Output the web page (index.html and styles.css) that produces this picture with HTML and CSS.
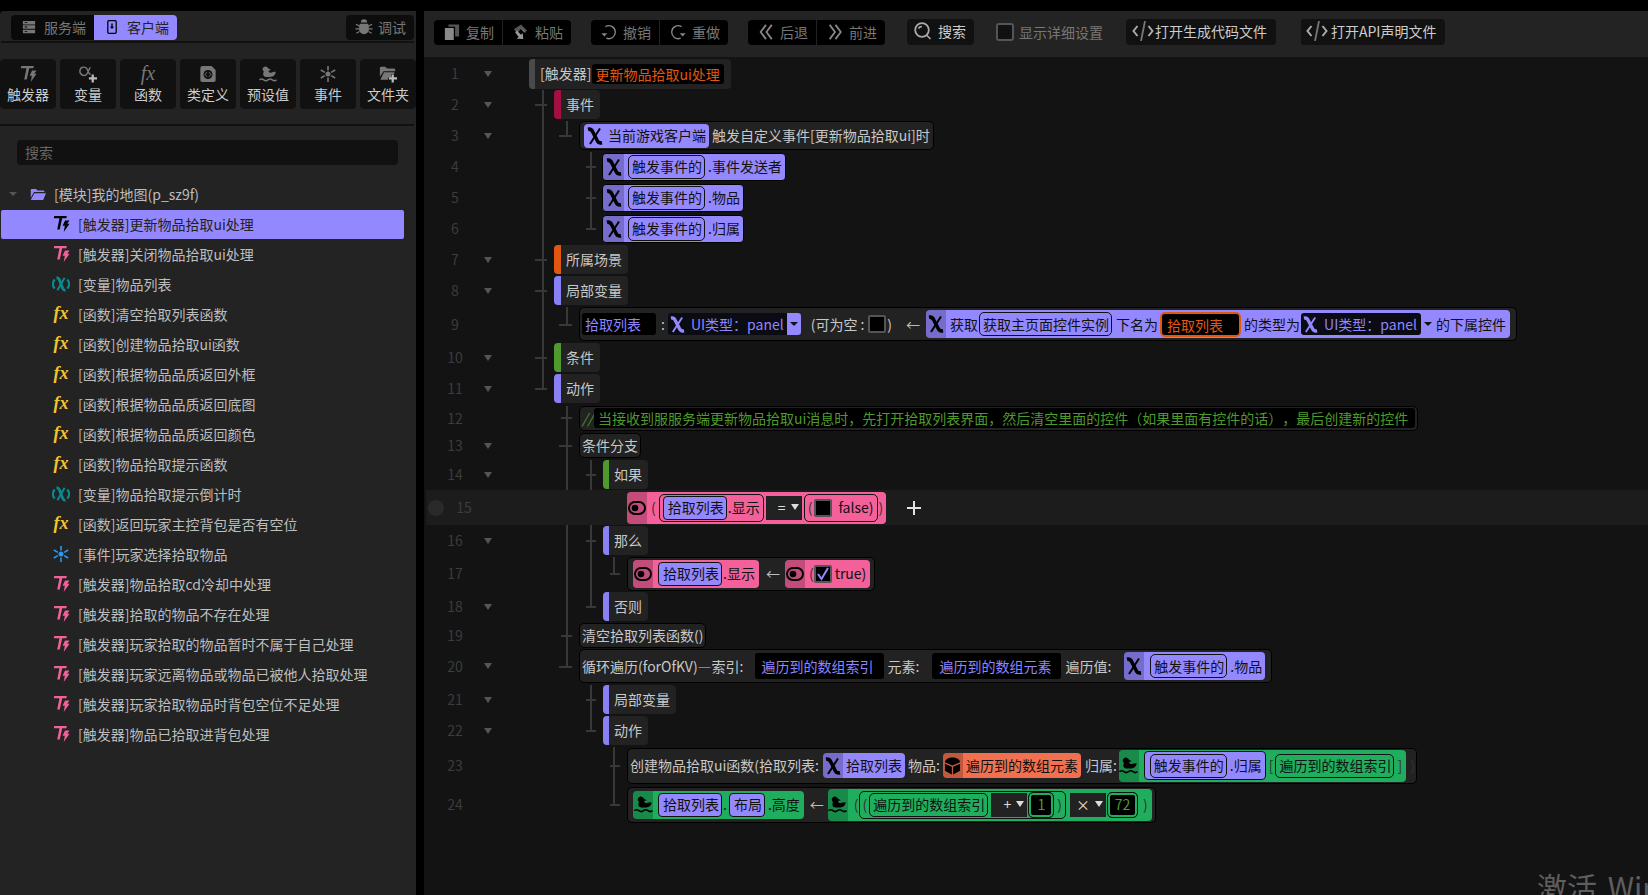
FILE: index.html
```html
<!DOCTYPE html>
<html lang="zh">
<head>
    <meta charset="UTF-8">
    <title>触发器编辑器</title>
    <link rel="stylesheet" href="styles.css">
</head>
<body>
    <!-- 图标 -->
    <svg class="defs" xmlns="http://www.w3.org/2000/svg">
        <symbol id="i-trig" viewBox="0 0 20 20"><path d="M2.500 1h14l-.6 2.600h-4.600L8.600 16H5.800L8.300 3.600H2z"/><path d="M14.500 6h5l-2.600 3.800h2.600L13 19l1.300-7h-2.500z"/></symbol>
        <symbol id="i-var" viewBox="0 0 16 20"><path d="M1 3.200c2.500-.6 3.800.6 4.700 2.500l4.600 9c.9 1.700 2.200 2.600 4.700 2.100" fill="none" stroke="currentColor" stroke-width="3.600"/><path d="M13 2.500 3 18" fill="none" stroke="currentColor" stroke-width="2"/></symbol>
        <symbol id="i-varp" viewBox="0 0 20 20"><path d="M5 3c1.800 0 2.500.7 3.100 2l3.800 10c.6 1.300 1.300 2 3.100 2" fill="none" stroke="currentColor" stroke-width="3.200"/><path d="M14 3 6 17" fill="none" stroke="currentColor" stroke-width="2.200"/><path d="M3 5C.5 8 .5 12 3 15M17 5c2.500 3 2.500 7 0 10" fill="none" stroke="currentColor" stroke-width="2.400"/></symbol>
        <symbol id="i-alpha" viewBox="0 0 20 20"><path d="M9 4.500C7 1 1 2 1 7s6 6 8 2.500L12.500 2.500M9 4.500c.8 2.500 1.800 5.500 4 6" fill="none" stroke="currentColor" stroke-width="1.600"/><path d="M11 13.500h3V10.500h2.500v3h3.500V16h-3.500v3.500H14V16h-3z" fill="#bbb"/></symbol>
        <symbol id="i-class" viewBox="0 0 20 20"><path d="M4 1h10l4.500 4.500V17a2 2 0 0 1-2 2h-13a2 2 0 0 1-2-2V3.500A2.500 2.500 0 0 1 4 1z"/><circle cx="10" cy="10.500" r="5" fill="#111"/><path d="M8.700 8 6.700 10.500l2 2.500M11.300 8l2 2.500-2 2.500" fill="none" stroke="currentColor"/></symbol>
        <symbol id="i-duck" viewBox="0 0 20 20"><path d="M5 2.500a3.500 3.500 0 0 1 5.500 1.500l3 1.500-3 .8c.5 1.700 1.500 2.400 3 2.200 2-.8 3.500-1 5-.8 0 3.300-2.500 5.500-6.500 5.500H8c-3 0-4.500-3-2.500-6C3.500 5.800 3.500 3.800 5 2.500z"/><path d="M.5 16.500q2.300-2 4.700 0t4.800 0 4.800 0 4.700 0" fill="none" stroke="currentColor" stroke-width="1.600"/></symbol>
        <symbol id="i-star" viewBox="0 0 20 20"><circle cx="10" cy="10" r="2.800"/><path d="M10 1v5M10 14v5M2 5.500l4.500 2.700M13.500 11.800 18 14.500M18 5.500l-4.500 2.700M6.500 11.800 2 14.500" fill="none" stroke="currentColor" stroke-width="1.800"/></symbol>
        <symbol id="i-foldadd" viewBox="0 0 20 20"><path d="M1 3.500C1 2.700 1.500 2 2.500 2h4.500l2 2h7.500c.8 0 1.500.7 1.500 1.500V7H5L1 13z"/><path d="M5.500 8H17v2H13.500v4H10v2.500H1.500z"/><path d="M11 13.500h3V10.500h2.500v3h3.500V16h-3.500v3.500H14V16h-3z" fill="#bbb"/></symbol>
        <symbol id="i-folder" viewBox="0 0 20 16"><path d="M1 2.500C1 1.500 1.500 1 2.500 1h5l2 2h7c1 0 1.500.5 1.500 1.500V5H5L1 12z"/><path d="M5.500 6.500H20L16.500 15h-14c-1 0-1.500-.5-1-1.500z"/></symbol>
        <symbol id="i-server" viewBox="0 0 16 16"><path d="M1 1h14v4H1zM1 6h14v4H1zM1 11h14v4H1z"/><path d="M3 2.500h3v1H3zM3 7.500h3v1H3zM3 12.500h3v1H3z" fill="#000"/></symbol>
        <symbol id="i-client" viewBox="0 0 14 20"><path d="M2.500 1h9A1.500 1.500 0 0 1 13 2.500v15a1.500 1.500 0 0 1-1.500 1.500h-9A1.500 1.500 0 0 1 1 17.500v-15A1.500 1.500 0 0 1 2.500 1z" fill="none" stroke="currentColor" stroke-width="1.800"/><path d="M6 5h2v4.500h2.200L7 13 3.800 9.500H6z"/></symbol>
        <symbol id="i-bug" viewBox="0 0 20 20"><path d="M6.500 5a3.500 3.500 0 0 1 7 0z"/><path d="M5.500 6.500h9c1 2 1 3.500 1 5.500 0 3.500-2.500 6-5.500 6s-5.500-2.500-5.500-6c0-2 0-3.500 1-5.500z"/><path d="M1 7l4 2M19 7l-4 2M.5 12h4M19.500 12h-4M1.500 17l3.500-2M18.500 17 15 15" fill="none" stroke="currentColor" stroke-width="1.400"/></symbol>
        <symbol id="i-copy" viewBox="0 0 16 18"><path d="M0 4.500h10V18H0z" fill="#8a8a8a"/><path d="M4 .5h12V14h-4.500V3H4z" fill="#555"/></symbol>
        <symbol id="i-paste" viewBox="0 0 18 18"><path d="M1 6 9 .5l7 7-3.500 2L9 5 5 10.500z" fill="#555"/><path d="M4 7l5 5 2-2 .5 7L4 16.500l2.500-2-4-5z" fill="#999"/><path d="M9 5l4.500 4.500" stroke="#999"/></symbol>
        <symbol id="i-undo" viewBox="0 0 18 18"><path d="M5 3a7.300 7.300 0 1 1 1 13" fill="none" stroke="currentColor" stroke-width="1.500"/><path d="M.5 10.500h6.500L3.700 14z"/></symbol>
        <symbol id="i-redo" viewBox="0 0 18 18"><path d="M13 3a7.300 7.300 0 1 0-1 13" fill="none" stroke="currentColor" stroke-width="1.500"/><path d="M17.500 10.500H11l3.300 3.500z"/></symbol>
        <symbol id="i-back" viewBox="0 0 16 18"><path d="M8 1 2 9l6 8M14.500 1l-6 8 6 8" fill="none" stroke="currentColor" stroke-width="2"/></symbol>
        <symbol id="i-fwd" viewBox="0 0 16 18"><path d="m2 1 6 8-6 8M8.500 1l6 8-6 8" fill="none" stroke="currentColor" stroke-width="2"/></symbol>
        <symbol id="i-search" viewBox="0 0 18 18"><circle cx="8" cy="8" r="6.800" fill="none" stroke="currentColor" stroke-width="1.800"/><path d="M4.500 6.500A4 4 0 0 1 8 4.500M12.500 13l4 4" fill="none" stroke="currentColor" stroke-width="1.600"/></symbol>
        <symbol id="i-code" viewBox="0 0 22 20"><path d="M5.500 5 1.500 10l4 5M16.500 5l4 5-4 5" fill="none" stroke="currentColor" stroke-width="2"/><path d="M13 0 9 20" fill="none" stroke="#777" stroke-width="1.800"/></symbol>
        <symbol id="i-eye" viewBox="0 0 18 14"><rect x="1" y="1" width="16" height="12" rx="6" fill="none" stroke="#000" stroke-width="2"/><circle cx="7" cy="7" r="3.300" fill="#000"/></symbol>
        <symbol id="i-box" viewBox="0 0 18 20"><path d="M1 6C1 3 5 1 9 1s8 2 8 5l-8 3.500z"/><path d="M1 7.500l7.300 3.200V19L1 15zM17 7.500l-7.300 3.200V19l7.300-4z"/></symbol>
        <symbol id="i-check" viewBox="0 0 14 14"><path d="m2 7 3.500 5L12 1" fill="none" stroke="#9488ff" stroke-width="2"/></symbol>
    </svg>

    <div class="app">
        <!-- 左侧面板 -->
        <aside class="side">
            <div class="side-tabs">
                <div class="tab-group">
                    <div class="tab"><svg class="ico i14"><use href="#i-server"/></svg>服务端</div>
                    <div class="tab active"><svg class="ico i14 client"><use href="#i-client"/></svg>客户端</div>
                </div>
                <div class="tab debug"><svg class="ico i18"><use href="#i-bug"/></svg>调试</div>
            </div>

            <div class="tools">
                <div class="tool"><svg class="ico i18"><use href="#i-trig"/></svg>触发器</div>
                <div class="tool"><svg class="ico i18"><use href="#i-alpha"/></svg>变量</div>
                <div class="tool"><span class="fx-ico">fx</span>函数</div>
                <div class="tool"><svg class="ico i18"><use href="#i-class"/></svg>类定义</div>
                <div class="tool"><svg class="ico i18"><use href="#i-duck"/></svg>预设值</div>
                <div class="tool"><svg class="ico i18"><use href="#i-star"/></svg>事件</div>
                <div class="tool"><svg class="ico i18"><use href="#i-foldadd"/></svg>文件夹</div>
            </div>

            <div class="search">搜索</div>

            <div class="tree">
                <div class="tree-root"><i class="caret"></i><svg class="ico folder"><use href="#i-folder"/></svg>[模块]我的地图(p_sz9f)</div>
                <div class="item selected"><svg class="ico i18"><use href="#i-trig"/></svg>[触发器]更新物品拾取ui处理</div>
                <div class="item"><svg class="ico i18 pink"><use href="#i-trig"/></svg>[触发器]关闭物品拾取ui处理</div>
                <div class="item"><svg class="ico i18 teal"><use href="#i-varp"/></svg>[变量]物品列表</div>
                <div class="item"><span class="fx-ico gold">fx</span>[函数]清空拾取列表函数</div>
                <div class="item"><span class="fx-ico gold">fx</span>[函数]创建物品拾取ui函数</div>
                <div class="item"><span class="fx-ico gold">fx</span>[函数]根据物品品质返回外框</div>
                <div class="item"><span class="fx-ico gold">fx</span>[函数]根据物品品质返回底图</div>
                <div class="item"><span class="fx-ico gold">fx</span>[函数]根据物品品质返回颜色</div>
                <div class="item"><span class="fx-ico gold">fx</span>[函数]物品拾取提示函数</div>
                <div class="item"><svg class="ico i18 teal"><use href="#i-varp"/></svg>[变量]物品拾取提示倒计时</div>
                <div class="item"><span class="fx-ico gold">fx</span>[函数]返回玩家主控背包是否有空位</div>
                <div class="item"><svg class="ico i18 blue"><use href="#i-star"/></svg>[事件]玩家选择拾取物品</div>
                <div class="item"><svg class="ico i18 pink"><use href="#i-trig"/></svg>[触发器]物品拾取cd冷却中处理</div>
                <div class="item"><svg class="ico i18 pink"><use href="#i-trig"/></svg>[触发器]拾取的物品不存在处理</div>
                <div class="item"><svg class="ico i18 pink"><use href="#i-trig"/></svg>[触发器]玩家拾取的物品暂时不属于自己处理</div>
                <div class="item"><svg class="ico i18 pink"><use href="#i-trig"/></svg>[触发器]玩家远离物品或物品已被他人拾取处理</div>
                <div class="item"><svg class="ico i18 pink"><use href="#i-trig"/></svg>[触发器]玩家拾取物品时背包空位不足处理</div>
                <div class="item"><svg class="ico i18 pink"><use href="#i-trig"/></svg>[触发器]物品已拾取进背包处理</div>
            </div>
        </aside>

        <!-- 右侧编辑区 -->
        <main class="main">
            <div class="toolbar">
                <div class="btn-group">
                    <div class="btn"><svg class="ico i16"><use href="#i-copy"/></svg>复制</div>
                    <div class="btn"><svg class="ico i16"><use href="#i-paste"/></svg>粘贴</div>
                </div>
                <div class="btn-group">
                    <div class="btn"><svg class="ico i16"><use href="#i-undo"/></svg>撤销</div>
                    <div class="btn"><svg class="ico i16"><use href="#i-redo"/></svg>重做</div>
                </div>
                <div class="btn-group">
                    <div class="btn"><svg class="ico i16"><use href="#i-back"/></svg>后退</div>
                    <div class="btn"><svg class="ico i16"><use href="#i-fwd"/></svg>前进</div>
                </div>
                <div class="btn solo search-btn"><svg class="ico i18"><use href="#i-search"/></svg>搜索</div>
                <div class="detail"><i class="check-off"></i>显示详细设置</div>
                <div class="btn solo code-btn"><svg class="ico i22"><use href="#i-code"/></svg>打开生成代码文件</div>
                <div class="btn solo code-btn api"><svg class="ico i22"><use href="#i-code"/></svg>打开API声明文件</div>
            </div>

            <div class="editor">
                <!-- 缩进线 -->
                <svg class="guides" xmlns="http://www.w3.org/2000/svg" width="300" height="780">
                    <path d="M119 33V332M111 48h12M111 203h12M111 234h12M111 301h12M111 332h12"/>
                    <path d="M143 64V79M135 79h13M143 250V268M135 268h13M143 349V610M137 361h11M135 389h13M137 579h11M135 610h13"/>
                    <path d="M167 95V172M162 110h10M162 141h10M162 172h10M167 403V550M162 418h10M162 484h10M162 550h10M167 628V674M162 643h10M162 674h10"/>
                    <path d="M190 500V517M186 517h10M190 690V748M186 709h10M186 748h10"/>
                </svg>

                <div class="row h31"><span class="ln">1</span><i class="fold"></i>
                    <div class="block l0 head"><i class="bar grey"></i><span>[触发器]</span><span class="title ml1">更新物品拾取ui处理</span></div>
                </div>
                <div class="row h31"><span class="ln">2</span><i class="fold"></i>
                    <div class="block l1"><i class="bar red"></i><span>事件</span></div>
                </div>
                <div class="row h31"><span class="ln">3</span><i class="fold"></i>
                    <div class="line l2"><div class="chip v event"><svg class="ico xv plain"><use href="#i-var"/></svg><span class="ml5">当前游戏客户端</span></div><span class="ml3">触发自定义事件[更新物品拾取ui]时</span></div>
                </div>
                <div class="row h31"><span class="ln">4</span><i class="nofold"></i>
                    <div class="chip v solo-chip"><span class="cap"><svg class="ico xv"><use href="#i-var"/></svg></span><span class="field">触发事件的</span><span>.事件发送者</span></div>
                </div>
                <div class="row h31"><span class="ln">5</span><i class="nofold"></i>
                    <div class="chip v solo-chip"><span class="cap"><svg class="ico xv"><use href="#i-var"/></svg></span><span class="field">触发事件的</span><span>.物品</span></div>
                </div>
                <div class="row h31"><span class="ln">6</span><i class="nofold"></i>
                    <div class="chip v solo-chip"><span class="cap"><svg class="ico xv"><use href="#i-var"/></svg></span><span class="field">触发事件的</span><span>.归属</span></div>
                </div>
                <div class="row h31"><span class="ln">7</span><i class="fold"></i>
                    <div class="block l1"><i class="bar orange"></i><span>所属场景</span></div>
                </div>
                <div class="row h31"><span class="ln">8</span><i class="fold"></i>
                    <div class="block l1"><i class="bar purple"></i><span>局部变量</span></div>
                </div>
                <div class="row h36 flat"><span class="ln">9</span><i class="nofold"></i>
                    <div class="line l2 tall">
                        <span class="input name">拾取列表</span>
                        <span class="ml5">:</span>
                        <div class="type ml3"><svg class="ico xs"><use href="#i-var"/></svg><span class="ml6">UI类型：panel</span><i class="drop"></i></div>
                        <span class="ml10">(可为空</span><span class="ml3">:</span>
                        <i class="box-off ml4"></i><span class="ml1">)</span>
                        <span class="arrow ml14">←</span>
                        <div class="chip v tall-chip long ml6"><span class="cap"><svg class="ico xv"><use href="#i-var"/></svg></span><span class="ml4">获取</span><span class="field ml1">获取主页面控件实例</span><span class="ml1">下名为</span><span class="input orange-in ml2">拾取列表</span><span class="ml3">的类型为</span><div class="type dark ml1"><svg class="ico xs"><use href="#i-var"/></svg><span class="ml6">UI类型：panel</span></div><i class="caret-dark"></i><span>的下属控件</span></div>
                    </div>
                </div>
                <div class="row h31"><span class="ln">10</span><i class="fold"></i>
                    <div class="block l1"><i class="bar green"></i><span>条件</span></div>
                </div>
                <div class="row h31"><span class="ln">11</span><i class="fold"></i>
                    <div class="block l1"><i class="bar purple"></i><span>动作</span></div>
                </div>
                <div class="row h28 flat"><span class="ln">12</span><i class="nofold"></i>
                    <div class="line l2 short"><span class="comment-mark">//</span><span class="comment">当接收到服服务端更新物品拾取ui消息时，先打开拾取列表界面，然后清空里面的控件（如果里面有控件的话），最后创建新的控件</span></div>
                </div>
                <div class="row h27"><span class="ln">13</span><i class="fold"></i>
                    <div class="line l2 short"><span>条件分支</span></div>
                </div>
                <div class="row h31"><span class="ln">14</span><i class="fold"></i>
                    <div class="block l3"><i class="bar green"></i><span>如果</span></div>
                </div>
                <div class="row h35 band"><i class="dot"></i><span class="ln">15</span><i class="nofold"></i>
                    <div class="chip p big cond l4"><span class="cap"><svg class="ico eye"><use href="#i-eye"/></svg></span><span class="ml4 faint">(</span>
                        <span class="field wide ml3"><span class="chip v inner">拾取列表</span><span class="ml1">.显示</span></span>
                        <span class="op ml2">=<i class="tri"></i></span>
                        <span class="field wide ml2"><span class="faint">(</span><i class="box-off ml2"></i><span class="ml6">false)</span></span><span class="ml1 faint">)</span>
                    </div>
                    <span class="plus ml21"></span>
                </div>
                <div class="row h31"><span class="ln">16</span><i class="fold"></i>
                    <div class="block l3"><i class="bar purple"></i><span>那么</span></div>
                </div>
                <div class="row h35"><span class="ln">17</span><i class="nofold"></i>
                    <div class="line l4 tall pr4">
                        <div class="chip p mid wide-end ml3"><span class="cap"><svg class="ico eye"><use href="#i-eye"/></svg></span><span class="chip v inner ml5">拾取列表</span><span class="ml1">.显示</span></div>
                        <span class="arrow ml7">←</span>
                        <div class="chip p mid wide-end ml5"><span class="cap"><svg class="ico eye"><use href="#i-eye"/></svg></span><span class="faint ml4">(</span><i class="box-on"><svg class="ico check"><use href="#i-check"/></svg></i><span class="ml3">true)</span></div>
                    </div>
                </div>
                <div class="row h31"><span class="ln">18</span><i class="fold"></i>
                    <div class="block l3"><i class="bar purple"></i><span>否则</span></div>
                </div>
                <div class="row h26 flat"><span class="ln">19</span><i class="nofold"></i>
                    <div class="line l2 short"><span>清空拾取列表函数()</span></div>
                </div>
                <div class="row h36 flat"><span class="ln">20</span><i class="fold"></i>
                    <div class="line l2 tall">
                        <span>循环遍历(forOfKV)—索引:</span>
                        <span class="input loop ml11">遍历到的数组索引</span>
                        <span class="ml4">元素:</span>
                        <span class="input loop ml13">遍历到的数组元素</span>
                        <span class="ml4">遍历值:</span>
                        <div class="chip v tall-chip ml13"><span class="cap"><svg class="ico xv"><use href="#i-var"/></svg></span><span class="field ml6">触发事件的</span><span>.物品</span></div>
                    </div>
                </div>
                <div class="row h31"><span class="ln">21</span><i class="fold"></i>
                    <div class="block l3"><i class="bar purple"></i><span>局部变量</span></div>
                </div>
                <div class="row h31"><span class="ln">22</span><i class="fold"></i>
                    <div class="block l3"><i class="bar purple"></i><span>动作</span></div>
                </div>
                <div class="row h39"><span class="ln">23</span><i class="nofold"></i>
                    <div class="line l4 xtall">
                        <span>创建物品拾取ui函数(拾取列表:</span>
                        <div class="chip v small ml4"><span class="cap"><svg class="ico xv"><use href="#i-var"/></svg></span><span class="ml3">拾取列表</span></div>
                        <span class="ml3">物品:</span>
                        <div class="chip r small ml3"><span class="cap"><svg class="ico xbox"><use href="#i-box"/></svg></span><span class="ml3">遍历到的数组元素</span></div>
                        <span class="ml4">归属:</span>
                        <div class="chip g big ml2"><span class="cap"><svg class="ico xduck"><use href="#i-duck"/></svg></span>
                            <span class="chip v nest ml5"><span class="field ml5">触发事件的</span><span>.归属</span></span>
                            <span class="faint ml3">[</span><span class="field ml2">遍历到的数组索引</span><span class="faint">]</span>
                        </div>
                        <span class="faint ml4">)</span>
                    </div>
                </div>
                <div class="row h39"><span class="ln">24</span><i class="nofold"></i>
                    <div class="line l4 xtall pr3">
                        <div class="chip g mid wide-end ml3"><span class="cap"><svg class="ico xduck"><use href="#i-duck"/></svg></span><span class="chip v inner ml5">拾取列表</span><span class="ml1">.</span><span class="chip v inner ml2">布局</span><span class="ml3">.高度</span></div>
                        <span class="arrow ml6">←</span>
                        <div class="chip g big ml4"><span class="cap"><svg class="ico xduck"><use href="#i-duck"/></svg></span><span class="faint ml6">(</span>
                            <span class="field wide ml0"><span class="faint">(</span><span class="field ml2">遍历到的数组索引</span><span class="op">+<i class="tri"></i></span><span class="field num ml1">1</span><span class="faint">)</span></span>
                            <span class="op ml4">×<i class="tri"></i></span><span class="field num n2 ml1">72</span><span class="faint ml2">)</span>
                        </div>
                    </div>
                </div>

                <div class="watermark">激活 Windows</div>
            </div>
        </main>
    </div>
</body>
</html>
```
FILE: styles.css
```css
/* General */
* {
    box-sizing: border-box;
}

html, body {
    height: 100%;
}

body {
    margin: 0;
    background-color: #000;
    color: #c8c8c8;
    font-family: "Noto Sans CJK SC", "Noto Sans", sans-serif;
    font-size: 14px;
    line-height: 20px;
    text-spacing-trim: space-all;
    overflow: hidden;
}

i {
    font-style: normal;
}

.defs {
    position: absolute;
    width: 0;
    height: 0;
}

.ico {
    display: block;
    flex: none;
    fill: currentColor;
}

.i14 { width: 14px; height: 14px; }
.i16 { width: 16px; height: 16px; }
.i18 { width: 18px; height: 18px; }
.i22 { width: 22px; height: 20px; }

.pink { color: #f4609a; }
.teal { color: #0a8a8f; }
.blue { color: #2f96ee; }

.app {
    display: flex;
    gap: 8px;
    height: 884px;
    margin-top: 11px;
}

/* Left panel */
.side {
    flex: none;
    width: 416px;
    background-color: #232323;
    border-radius: 4px 0 0 0;
    padding-top: 4px;
}

.side-tabs {
    display: flex;
    justify-content: space-between;
    height: 28px;
    margin: 0 2px 0 1px;
    padding: 0 0 0 10px;
    border-bottom: 2px solid #111;
}

.tab-group {
    display: flex;
    height: 25px;
    background-color: #0a0a0a;
    border-radius: 4px;
}

.tab {
    display: flex;
    align-items: center;
    gap: 8px;
    width: 83px;
    height: 25px;
    padding: 0 0 2px 11px;
    color: #777;
    border-radius: 4px;
}

.tab.active {
    background-color: #9488ff;
    color: #222;
    border-radius: 0 4px 4px 0;
}

.tab.active .client {
    color: #000;
}

.tab.debug {
    width: 68px;
    padding-left: 9px;
    gap: 5px;
    background-color: #0d0d0d;
}

.tools {
    display: flex;
    gap: 4px;
    height: 83px;
    margin-right: 2px;
    padding-top: 16px;
    border-bottom: 2px solid #111;
}

.tool {
    display: flex;
    flex-direction: column;
    align-items: center;
    width: 56px;
    height: 50px;
    padding-top: 6px;
    background-color: #111;
    border-radius: 4px;
    color: #ccc;
}

.tool:last-child {
    margin-right: -2px;
}

.tool .ico {
    color: #777;
    height: 18px;
    margin-bottom: 1px;
}

.fx-ico {
    flex: none;
    display: block;
    width: 18px;
    height: 18px;
    font-family: "Liberation Serif", serif;
    font-style: italic;
    font-size: 20px;
    line-height: 17px;
    color: #777;
    text-align: center;
}

.tool .fx-ico {
    margin-bottom: 1px;
}

.fx-ico.gold {
    color: #f2c230;
    font-size: 18px;
    font-weight: bold;
}

.search {
    height: 25px;
    margin: 14px 18px 0 17px;
    padding: 2px 8px;
    background-color: #111;
    border-radius: 4px;
    color: #666;
}

.tree {
    margin-top: 15px;
    color: #bdbdbd;
}

.tree-root {
    display: flex;
    align-items: center;
    height: 30px;
    padding: 0 0 2px 9px;
}

.caret {
    width: 0;
    height: 0;
    border-left: 4px solid transparent;
    border-right: 4px solid transparent;
    border-top: 4px solid #555;
    margin-right: 13px;
}

.folder {
    width: 16px;
    height: 13px;
    color: #9488ff;
    margin-right: 8px;
}

.item {
    display: flex;
    align-items: center;
    gap: 8px;
    height: 30px;
    padding: 0 0 2px 52px;
}

.item.selected {
    height: 29px;
    margin: 0 12px 1px 1px;
    padding-left: 51px;
    background-color: #9488ff;
    border-radius: 2px;
    color: #222;
}

.item.selected .ico {
    color: #000;
}

/* Toolbar */
.main {
    flex: 1;
    display: flex;
    flex-direction: column;
    min-width: 0;
}

.toolbar {
    flex: none;
    display: flex;
    align-items: flex-start;
    height: 46px;
    padding: 9px 0 0 10px;
    background-color: #232323;
}

.btn-group {
    display: flex;
    margin-right: 20px;
    background-color: #000;
    border-radius: 4px;
}

.btn {
    display: flex;
    align-items: center;
    gap: 6px;
    width: 68px;
    height: 25px;
    padding: 0 0 2px 10px;
    color: #777;
}

.btn + .btn {
    width: 69px;
    border-left: 1px solid #222;
}

.btn .i16 {
    color: #888;
}

.solo {
    background-color: #111;
    border-radius: 4px;
    height: 26px;
    margin-top: -1px;
    color: #ccc;
}

.search-btn {
    width: 67px;
    padding-left: 7px;
    margin-left: 2px;
}

.btn.solo .ico {
    color: #aaa;
}

.detail {
    display: flex;
    align-items: center;
    gap: 5px;
    height: 25px;
    padding-bottom: 2px;
    margin-left: 22px;
    color: #777;
}

.check-off {
    width: 18px;
    height: 18px;
    background-color: #111;
    border: 2px solid #555;
    border-radius: 3px;
}

.code-btn {
    width: 150px;
    margin-left: 23px;
    padding-left: 6px;
    gap: 1px;
}

.code-btn.api {
    width: 145px;
    margin-left: 24px;
    padding-left: 5px;
    gap: 3px;
}

/* Editor */
.editor {
    position: relative;
    flex: 1;
    background-color: #131313;
    overflow: hidden;
    padding-top: 1px;
}

.guides {
    position: absolute;
    left: 0;
    top: 0;
    fill: none;
    stroke: #383838;
    stroke-width: 2;
}

.row {
    position: relative;
    display: flex;
    align-items: center;
}

.h26 { height: 26px; }
.h27 { height: 27px; }
.h28 { height: 28px; }
.h31 { height: 31px; }
.h35 { height: 35px; }
.h36 { height: 36px; }
.h39 { height: 39px; }

.ln {
    flex: none;
    width: 56px;
    margin-left: 3px;
    text-align: center;
    color: #3c3c3c;
}

.fold, .nofold {
    flex: none;
    width: 10px;
    height: 6px;
}

.fold::before {
    content: "";
    display: block;
    width: 0;
    height: 0;
    margin-left: 1px;
    border-left: 4px solid transparent;
    border-right: 4px solid transparent;
    border-top: 6px solid #555;
}

.l0 { margin-left: 36px; }
.l1 { margin-left: 61px; }
.l2 { margin-left: 86px; }
.l3 { margin-left: 110px; }
.l4 { margin-left: 134px; }

.block {
    display: flex;
    align-items: center;
    height: 29px;
    padding-right: 6px;
    background-color: #222;
    border-radius: 4px;
    color: #c8c8c8;
}

.block.head {
    height: 30px;
    padding-right: 0;
}

.bar {
    flex: none;
    align-self: stretch;
    width: 6px;
    margin-right: 5px;
    border-radius: 4px 0 0 4px;
}

.l1 > .bar {
    width: 7px;
}

.bar.grey { background-color: #4a4a4a; }
.bar.red { background-color: #a30f42; }
.bar.orange { background-color: #e2570f; }
.bar.purple { background-color: #8a80f5; }
.bar.green { background-color: #4f9a2c; }

.title {
    margin-right: 7px;
    padding: 1px 4px 1px 3px;
    background-color: #000;
    border-radius: 3px;
    color: #e2570f;
}

.line {
    display: inline-flex;
    align-items: center;
    flex: none;
    height: 29px;
    padding: 0 3px 0 4px;
    background-color: #222;
    border: 1px solid #000;
    border-radius: 5px;
}

.line.short { height: 25px; padding: 0 2px; }
.line.tall { height: 34px; padding: 0 6px 0 2px; }
.line.xtall { height: 36px; padding: 0 1px 0 2px; }
.line.pr3 { padding-right: 3px; }
.line.pr4 { padding-right: 4px; }

.chip {
    display: inline-flex;
    align-items: center;
    flex: none;
    height: 24px;
    padding-right: 3px;
    color: #111;
    border-radius: 4px;
    overflow: hidden;
}

.chip.event { padding-right: 3px; }

.chip.v { background-color: #9488ff; }
.chip.p { background-color: #f4609a; }
.chip.g { background-color: #1fae5e; }
.chip.r { background-color: #f2704f; }

.chip.solo-chip {
    height: 28px;
    margin-left: 109px;
    padding-right: 3px;
    border: 1px solid #000;
}

.solo-chip > .cap {
    width: 21px;
}

.chip.tall-chip { height: 28px; }
.chip.long { padding-right: 4px; }
.chip.small { height: 25px; }
.chip.mid { height: 28px; }
.chip.wide-end { padding-right: 4px; }
.chip.big { height: 32px; padding-right: 4px; }
.chip.cond { padding-right: 3px; }

.chip.inner {
    height: 24px;
    padding: 0 2px 0 4px;
    border: 1px solid #111;
}

.chip.nest {
    height: 29px;
    padding: 0 3px 0 0;
    border: 1px solid #111;
}

.cap {
    flex: none;
    align-self: stretch;
    display: flex;
    align-items: center;
    justify-content: center;
    width: 20px;
    background-color: rgba(0, 0, 0, 0.2);
    color: #000;
}

.xv { width: 16px; height: 20px; color: #000; }
.xs { width: 15px; height: 19px; color: #9488ff; margin-left: 2px; }
.plain { margin-left: 3px; }
.eye { width: 18px; height: 14px; }
.xbox { width: 17px; height: 20px; }
.xduck { width: 19px; height: 19px; }
.check { width: 14px; height: 14px; }

.field {
    display: inline-flex;
    align-items: center;
    height: 24px;
    margin: 0 3px 0 4px;
    padding: 0 2px 0 3px;
    border: 1px solid #111;
    border-radius: 5px;
}

.field.wide {
    height: 28px;
    margin-right: 0;
    padding: 0 3px;
}

.faint {
    color: #333;
}

.input {
    height: 22px;
    padding: 1px 3px;
    background-color: #000;
    border-radius: 3px;
    color: #8f85ff;
}

.input.name {
    width: 74px;
}

.input.loop {
    height: 26px;
    padding: 3px 10px 0 7px;
}

.input.orange-in {
    width: 81px;
    height: 25px;
    padding: 1px 5px;
    border: 2px solid #e2570f;
    border-radius: 5px;
    color: #e2570f;
}

.type {
    display: inline-flex;
    align-items: center;
    height: 22px;
    background-color: #0b0b14;
    border-radius: 3px;
    color: #8f85ff;
    overflow: hidden;
}

.type .ml6 {
    margin-right: 3px;
}

.type.dark .ml6 {
    margin-right: 4px;
}

.drop {
    position: relative;
    width: 14px;
    align-self: stretch;
    background-color: #9488ff;
}

.drop::after, .caret-dark::after {
    content: "";
    position: absolute;
    left: 3px;
    top: 9px;
    border-left: 4px solid transparent;
    border-right: 4px solid transparent;
    border-top: 4px solid #111;
}

.caret-dark {
    position: relative;
    width: 14px;
    height: 22px;
    margin-right: 1px;
}

.box-off, .box-on {
    flex: none;
    display: flex;
    align-items: center;
    justify-content: center;
    width: 18px;
    height: 18px;
    background-color: #000;
    border: 2px solid #555;
    border-radius: 2px;
}

.arrow {
    width: 14px;
    color: #bbb;
}

.comment-mark {
    margin-right: 1px;
    color: #4f9a2c;
    font-style: italic;
}

.comment {
    padding: 0 7px 0 4px;
    background-color: #000;
    border-radius: 3px;
    color: #4f9a2c;
}

.op {
    display: inline-flex;
    align-items: center;
    justify-content: flex-end;
    gap: 5px;
    width: 36px;
    height: 24px;
    padding-right: 3px;
    background-color: #222;
    color: #ddd;
}

.tri {
    width: 0;
    height: 0;
    border-left: 4px solid transparent;
    border-right: 4px solid transparent;
    border-top: 6px solid #ddd;
}

.field.num {
    justify-content: center;
    width: 26px;
    height: 26px;
    margin-right: 3px;
    padding: 0;
    background-color: #000;
    box-shadow: 0 0 0 2px #1fae5e inset;
    color: #4f9a2c;
}

.field.n2 {
    width: 31px;
}

.band {
    background-color: #1c1c1c;
    margin-left: 2px;
}

.band .ln {
    width: 38px;
    margin-left: 1px;
}

.dot {
    flex: none;
    width: 16px;
    height: 16px;
    margin-left: 2px;
    border-radius: 50%;
    background-color: #2a2a2a;
}

.plus {
    position: relative;
    flex: none;
    width: 14px;
    height: 14px;
}

.plus::before, .plus::after {
    content: "";
    position: absolute;
    background-color: #e4e4e4;
}

.plus::before { left: 6px; top: 0; width: 2px; height: 14px; }
.plus::after { left: 0; top: 6px; width: 14px; height: 2px; }

.watermark {
    position: absolute;
    left: 1113px;
    top: 814px;
    font-size: 30px;
    line-height: 30px;
    word-spacing: 4px;
    white-space: nowrap;
    color: #5e5e5e;
}

/* Text sits 1px higher in most rows */
.row:not(.flat) .ln,
.row:not(.flat) .line > span,
.row:not(.flat) .chip > span,
.row:not(.flat) .block > span,
.row:not(.flat) .field.wide > span {
    padding-bottom: 2px;
}

.row:not(.flat) .chip > .cap,
.row:not(.flat) .chip > .field.wide,
.row:not(.flat) .chip > .nest,
.row:not(.flat) .block > .title {
    padding-bottom: 0;
}

.block.head > .title {
    padding-top: 0;
    padding-bottom: 2px;
}

/* Margin helpers */
.ml0 { margin-left: 0; }
.ml1 { margin-left: 1px; }
.ml2 { margin-left: 2px; }
.ml3 { margin-left: 3px; }
.ml4 { margin-left: 4px; }
.ml5 { margin-left: 5px; }
.ml6 { margin-left: 6px; }
.ml7 { margin-left: 7px; }
.ml10 { margin-left: 10px; }
.ml11 { margin-left: 11px; }
.ml13 { margin-left: 13px; }
.ml14 { margin-left: 14px; }
.ml21 { margin-left: 21px; }
```
